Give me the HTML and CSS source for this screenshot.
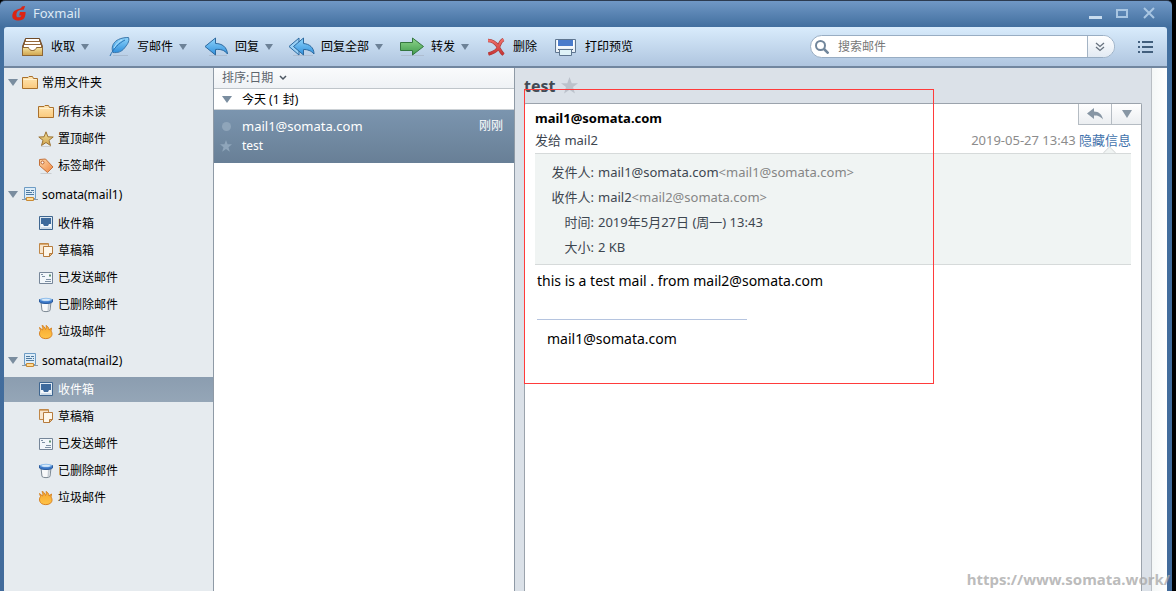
FILE: index.html
```html
<!DOCTYPE html>
<html lang="zh-CN">
<head>
<meta charset="utf-8">
<title>Foxmail</title>
<link rel="stylesheet" href="styles.css">
</head>
<body>
<svg class="defs" aria-hidden="true">
  <defs>
    <linearGradient id="gBlue" x1="0" y1="0" x2="0" y2="1"><stop offset="0" stop-color="#8fd4fb"/><stop offset="1" stop-color="#2f8fdc"/></linearGradient>
    <linearGradient id="gGreen" x1="0" y1="0" x2="0" y2="1"><stop offset="0" stop-color="#8fd68c"/><stop offset="1" stop-color="#3f9a4c"/></linearGradient>
    <linearGradient id="gGold" x1="0" y1="0" x2="0" y2="1"><stop offset="0" stop-color="#f4e3a0"/><stop offset="1" stop-color="#cfa24a"/></linearGradient>
    <linearGradient id="gFolder" x1="0" y1="0" x2="0" y2="1"><stop offset="0" stop-color="#ffe6b3"/><stop offset="1" stop-color="#fbc97c"/></linearGradient>
    <linearGradient id="gTag" x1="0" y1="0" x2="1" y2="1"><stop offset="0" stop-color="#ffd9a8"/><stop offset="1" stop-color="#ee8540"/></linearGradient>
    <linearGradient id="gFlame" x1="0" y1="0" x2="0" y2="1"><stop offset="0" stop-color="#f6a72e"/><stop offset="1" stop-color="#ffc347"/></linearGradient>
    <linearGradient id="gRed" x1="0" y1="0" x2="0" y2="1"><stop offset="0" stop-color="#f0706a"/><stop offset="1" stop-color="#c73333"/></linearGradient>
  </defs>
  <symbol id="folder" viewBox="0 0 16 16"><path d="M.5 13.500v-11h5.500l1-1h3.500l1 2h4v10z" fill="url(#gFolder)" stroke="#a9702c"/><path d="M1.500 4.500h13" stroke="#fff1d0"/></symbol>
  <symbol id="star" viewBox="0 0 16 16"><path d="M3 15.500h10" stroke="#c9cdd0"/><path d="M8 .8l1.900 5 5.300.2-4.200 3.300 1.500 5.200L8 11.500l-4.500 3 1.500-5.200L.8 6l5.300-.2z" fill="url(#gGold)" stroke="#9c7333" stroke-linejoin="round"/></symbol>
  <symbol id="tag" viewBox="0 0 16 16"><path d="M2.500 15.500h11" stroke="#c9cdd0"/><path d="M1.500 1.500l6-.5 7.500 8-5.500 5.500L1.500 7.500z" fill="url(#gTag)" stroke="#c4713a" stroke-linejoin="round"/><circle cx="4.500" cy="4.500" r="1.500" fill="#fff" stroke="#b55f2f"/></symbol>
  <symbol id="server" viewBox="0 0 16 16"><path d="M2.500 .5h11v11h-11z" fill="#dcecf8" stroke="#6e9cc4"/><path d="M4 3.500h4M9 3.500h3M4 5.500h6M11 5.500h1M4 7.500h8" stroke="#4f7aa0"/><path d="M0 12.500h16" stroke="#8b98a4"/><path d="M4.500 10.500h7v3h-7z" fill="#ffdc96" stroke="#c98a35"/></symbol>
  <symbol id="inbox" viewBox="0 0 16 16"><path d="M1.500 .5h13v13h-13z" fill="#dfe9f2" stroke="#3f6690"/><path d="M3 2h10v8H3z" fill="#3e6a9c"/><path d="M3 8h2l1 2h4l1-2h2v3.500H3z" fill="#f4f8fb"/><path d="M3 12h10" stroke="#b8cbdc"/></symbol>
  <symbol id="drafts" viewBox="0 0 16 16"><path d="M1.500 .5h9v10h-9z" fill="#f7e5cc" stroke="#c08747"/><path d="M2 1.500h8" stroke="#d9a96f"/><path d="M5.500 3.500h9v7l-3 3h-6z" fill="#fdf6e9" stroke="#b67b3c"/><path d="M14.500 10.500h-3v3z" fill="#e8bc84" stroke="#b67b3c"/></symbol>
  <symbol id="sent" viewBox="0 0 16 16"><path d="M1.500 2.500h13v11h-13z" fill="#f2f7fb" stroke="#768699"/><path d="M11 4.500h2v2h-2z" fill="#5f9172"/><path d="M3 4.500h2M4 6.500h3M8 9.500h5M7 11.500h6" stroke="#7e91a5"/></symbol>
  <symbol id="trash" viewBox="0 0 16 16"><path d="M3 5l1 8.500c1 1.500 7 1.500 8 0L13 5z" fill="#f8f9fa" stroke="#7c8893"/><path d="M10 6h2l-1 8H9.500z" fill="#c5ccd3"/><path d="M1.500 2.500h13v2.500c-2 2-11 2-13 0z" fill="#3c78c8" stroke="#2b5c9e"/><ellipse cx="8" cy="2.500" rx="6" ry="1.800" fill="#8fbdeb"/><ellipse cx="8" cy="2.800" rx="4" ry="1" fill="#d8eafa"/></symbol>
  <symbol id="flame" viewBox="0 0 16 16"><path d="M3.500 13.500C1 11.500 1 8.500 2.500 6.500l-1-3 3 2.500c1-1.500 0-3-.5-4.500 2 .5 3 2 3.500 4 1-1 1-2.500.5-4 2 1 3 2.500 3 4.500l2.500-2-.5 3c1.500 2 1.500 5-1 6.500-2 1.500-6.500 1.500-8.500 0z" fill="url(#gFlame)" stroke="#d78324"/></symbol>
  <symbol id="flatstar" viewBox="0 0 16 16"><path d="M8 0l2.100 5.800H16l-4.700 3.700 1.800 6L8 12l-5.100 3.500 1.800-6L0 5.800h5.900z" fill="currentColor"/></symbol>
</svg>

<div class="window">
  <header class="titlebar">
    <svg class="logo" viewBox="0 0 16 16"><path d="M14 0l-1.500 4C9 3.500 5.800 4.500 5 7.500c-.6 2.500-.5 4.300 1.500 4.500 1.800.2 3-.5 3.500-2H7.500L8.500 6.500h6c-.2 5-1 9-7.500 9C1.500 15.500-.5 13 .6 8.500 1.300 6 3 4.500 5.500 3.800 8 3 10 2.500 10.500.5z" fill="#dd2413"/></svg>
    <span class="app-name">Foxmail</span>
    <div class="window-controls">
      <button aria-label="最小化"><svg viewBox="0 0 14 14"><path d="M0 11.500h13" stroke="#c8dcef" stroke-width="3"/></svg></button>
      <button aria-label="最大化"><svg viewBox="0 0 14 14"><path d="M1 4h10v7H1z" fill="none" stroke="#a9c6e2" stroke-width="2"/></svg></button>
      <button aria-label="关闭"><svg viewBox="0 0 14 14"><path d="M1 2l10 10M11 2L1 12" stroke="#a9c6e2" stroke-width="2"/></svg></button>
    </div>
  </header>

  <div class="toolbar">
    <nav class="actions" aria-label="邮件操作">
      <button class="action"><svg class="tool-icon" viewBox="0 0 29 22"><path d="M9.500 2.500h14l3 8v9h-20v-9z" fill="#95693c" stroke="#6f4a27" stroke-linejoin="round"/><path d="M10 3h13v2H10zM9 6h15v2H9zM8 9h17v5H8z" fill="#fff"/><path d="M6.500 11.500h6c.5 2 2 3 4 3s3.500-1 4-3h6v8h-20z" fill="url(#gGold)" stroke="#8c6534" stroke-linejoin="round"/></svg><span>收取</span><i class="caret"></i></button>
      <button class="action"><svg class="tool-icon" viewBox="0 0 29 22"><path d="M11 19.500h15" stroke="#a8bacf"/><path d="M11 16.500C8 9 13.500 1.500 26.500 1.500c1.500 4-2 8-4 10.500-3 4-7 5-11.500 4.500z" fill="url(#gBlue)" stroke="#3976ab"/><path d="M8 20C11 13 17 7 23 4" fill="none" stroke="#2a73b3"/><path d="M12 12c2-4 5-7 8-8" fill="none" stroke="#b9e4fc"/></svg><span>写邮件</span><i class="caret"></i></button>
      <button class="action"><svg class="tool-icon" viewBox="0 0 29 22"><path d="M9 19.500h18" stroke="#aebdd0"/><path d="M5 10.500L15.500 2v5.500C22 7.500 27 11 27.500 18c-3-4-7-5-12-4.500V19z" fill="url(#gBlue)" stroke="#2c699f" stroke-linejoin="round"/></svg><span>回复</span><i class="caret"></i></button>
      <button class="action"><svg class="tool-icon" viewBox="0 0 29 22"><path d="M7 19.500h20" stroke="#aebdd0"/><path d="M3 10.500L13 2v17z" fill="#9bd1f5" stroke="#2c699f"/><path d="M7.500 10.500L17.500 2v5.500c6 .5 10.500 4 10.500 10.500-3-3.500-6.500-4.500-10.500-4.500V19z" fill="url(#gBlue)" stroke="#2c699f" stroke-linejoin="round"/></svg><span>回复全部</span><i class="caret"></i></button>
      <button class="action"><svg class="tool-icon" viewBox="0 0 29 22"><path d="M5 19.500h23" stroke="#aebdd0"/><path d="M4.500 6.500h12V2L27.500 10.500 16.500 19v-4.500h-12z" fill="url(#gGreen)" stroke="#34773f" stroke-linejoin="round"/></svg><span>转发</span><i class="caret"></i></button>
      <button class="action"><svg class="tool-icon narrow" viewBox="0 0 25 22"><path d="M6 4.500c5 0 8 3 10 6 2 4 3 6 5.500 8M21.500 3.500c-4 2-4 6-6 9.500-2 2.500-5 4-9 5" fill="none" stroke="#a33a3a" stroke-width="3.500"/><path d="M6 4.500c5 0 8 3 10 6 2 4 3 6 5.500 8M21.500 3.500c-4 2-4 6-6 9.500-2 2.500-5 4-9 5" fill="none" stroke="url(#gRed)" stroke-width="2.300"/></svg><span>删除</span></button>
      <button class="action"><svg class="tool-icon" viewBox="0 0 29 22"><path d="M5.500 3.500h20v13h-20z" fill="#e9f0f7" stroke="#5f7690"/><path d="M8 4h15v6H8z" fill="#4a7bcb"/><path d="M7.500 4v7h16V4" fill="none" stroke="#fff"/><path d="M8 13.500h15" stroke="#47617c"/><path d="M9.500 13.500h12v6h-12z" fill="#dff3f8" stroke="#5f7690"/></svg><span>打印预览</span></button>
    </nav>
    <div class="search">
      <label class="search-label" for="q" aria-label="搜索邮件"><svg viewBox="0 0 14 14"><circle cx="5.500" cy="5.500" r="4.500" fill="none" stroke="#71869b" stroke-width="2"/><path d="M9 9l4.500 4.500" stroke="#71869b" stroke-width="2.500"/></svg></label>
      <input id="q" type="text" placeholder="搜索邮件">
      <button class="search-more" aria-label="高级搜索"><svg viewBox="0 0 10 10"><path d="M1 1l4 3.500L9 1M1 5l4 3.500L9 5" fill="none" stroke="#66717d" stroke-width="1.300"/></svg></button>
    </div>
    <button class="menu" aria-label="菜单"><svg viewBox="0 0 16 14"><path d="M0 2h2M0 7h2M0 12h2M4 2h11M4 7h11M4 12h11" stroke="#425f7d" stroke-width="2"/></svg></button>
  </div>

  <main class="panes">
    <nav class="folders" aria-label="文件夹">
      <button class="group"><i class="caret"></i><svg><use href="#folder"/></svg>常用文件夹</button>
      <a class="folder" href="#"><svg><use href="#folder"/></svg>所有未读</a>
      <a class="folder" href="#"><svg><use href="#star"/></svg>置顶邮件</a>
      <a class="folder" href="#"><svg><use href="#tag"/></svg>标签邮件</a>
      <button class="group"><i class="caret"></i><svg><use href="#server"/></svg>somata(mail1)</button>
      <a class="folder" href="#"><svg><use href="#inbox"/></svg>收件箱</a>
      <a class="folder" href="#"><svg><use href="#drafts"/></svg>草稿箱</a>
      <a class="folder" href="#"><svg><use href="#sent"/></svg>已发送邮件</a>
      <a class="folder" href="#"><svg><use href="#trash"/></svg>已删除邮件</a>
      <a class="folder" href="#"><svg><use href="#flame"/></svg>垃圾邮件</a>
      <button class="group"><i class="caret"></i><svg><use href="#server"/></svg>somata(mail2)</button>
      <a class="folder selected" href="#"><svg><use href="#inbox"/></svg>收件箱</a>
      <a class="folder" href="#"><svg><use href="#drafts"/></svg>草稿箱</a>
      <a class="folder" href="#"><svg><use href="#sent"/></svg>已发送邮件</a>
      <a class="folder" href="#"><svg><use href="#trash"/></svg>已删除邮件</a>
      <a class="folder" href="#"><svg><use href="#flame"/></svg>垃圾邮件</a>
    </nav>

    <section class="messages" aria-label="邮件列表">
      <button class="sort">排序:日期<svg viewBox="0 0 8 6"><path d="M1 1l3 3 3-3" fill="none" stroke="#4c5661" stroke-width="1.500"/></svg></button>
      <button class="day"><i class="caret"></i>今天 (1 封)</button>
      <article class="message">
        <i class="dot"></i>
        <span class="from">mail1@somata.com</span>
        <time class="when">刚刚</time>
        <svg class="flag"><use href="#flatstar"/></svg>
        <span class="title">test</span>
      </article>
    </section>

    <section class="reader">
      <h1 class="subject">test<svg><use href="#flatstar"/></svg></h1>
      <article class="mail">
        <header class="mail-head">
          <div class="people">
            <strong>mail1@somata.com</strong>
            <span>发给 mail2</span>
          </div>
          <div class="head-side">
            <div class="mail-buttons">
              <button aria-label="回复"><svg viewBox="0 0 16 12"><path d="M0 5.500L7 0v3.500c5 0 8 3 9 8-3-3.500-5.500-4-9-4V11z" fill="#8796a4"/></svg></button>
              <button aria-label="更多"><i class="caret"></i></button>
            </div>
            <p class="sent-at"><time>2019-05-27 13:43</time> <a href="#">隐藏信息</a></p>
          </div>
        </header>
        <dl class="details">
          <dt>发件人:</dt><dd>mail1@somata.com<span>&lt;mail1@somata.com&gt;</span></dd>
          <dt>收件人:</dt><dd>mail2<span>&lt;mail2@somata.com&gt;</span></dd>
          <dt>时间:</dt><dd>2019年5月27日 (周一) 13:43</dd>
          <dt>大小:</dt><dd>2 KB</dd>
        </dl>
        <div class="mail-body">
          <p>this is a test mail . from mail2@somata.com</p>
          <hr>
          <p class="signature">mail1@somata.com</p>
        </div>
      </article>
      <div class="marker"></div>
    </section>
    <aside class="rail"></aside>
  </main>
  <div class="watermark">https://www.somata.work/</div>
</div>
</body>
</html>
```
FILE: styles.css
```css
* { box-sizing: border-box; }

body {
  margin: 0;
  background: #000;
  font: 12px/16px "Noto Sans", "Noto Sans CJK SC", sans-serif;
  color: #000;
}

button {
  margin: 0;
  padding: 0;
  border: 0;
  background: none;
  font: inherit;
  color: inherit;
  text-align: left;
}

a { color: inherit; text-decoration: none; }
p { margin: 0; }
.defs { position: absolute; width: 0; height: 0; }

.caret {
  flex: none;
  width: 0;
  height: 0;
  border: 4px solid transparent;
  border-top: 6px solid #6d8297;
  border-bottom: 0;
}

.window {
  position: relative;
  display: flex;
  flex-direction: column;
  min-height: 100vh;
  margin-right: 4px;
  padding: 0 5px 0 4px;
  border-top: 1px solid #2c3b50;
  border-radius: 5px 5px 0 0;
  background: linear-gradient(#7098c6, #426f9f 26px, #426b9b);
}

.titlebar {
  display: flex;
  align-items: center;
  height: 26px;
  padding: 0 10px 2px 8px;
}
.logo { width: 15px; height: 15px; }
.app-name { margin-left: 6px; color: #dde9f5; font-size: 13px; }
.window-controls { display: flex; gap: 13px; margin-left: auto; }
.window-controls svg { display: block; width: 14px; height: 14px; }

.toolbar {
  display: flex;
  align-items: center;
  height: 41px;
  padding: 0 13px 0 12px;
  border-bottom: 2px solid #71869f;
  border-radius: 3px 3px 0 0;
  background: linear-gradient(#d9ecfc, #afc5df);
}
.actions { display: flex; gap: 13px; }
.action { display: flex; align-items: center; gap: 6px; white-space: nowrap; }
.tool-icon { width: 29px; height: 22px; }
.tool-icon.narrow { width: 25px; }

.search {
  display: flex;
  width: 305px;
  height: 23px;
  margin-left: auto;
  border: 1px solid #98adc3;
  border-radius: 12px;
  background: #fff;
  overflow: hidden;
}
.search-label { display: flex; align-items: center; padding: 0 9px 0 4px; }
.search-label svg { width: 14px; height: 14px; }
.search input {
  flex: 1;
  min-width: 0;
  padding: 0;
  border: 0;
  outline: 0;
  background: none;
  font: inherit;
}
.search input::placeholder { color: #777; opacity: 1; }
.search-more {
  display: flex;
  align-items: center;
  justify-content: center;
  width: 27px;
  padding-right: 3px;
  border-left: 1px solid #a4b4c5;
  background: linear-gradient(#fff, #e2eaf3);
}
.search-more svg { width: 10px; height: 10px; }
.menu { margin-left: 23px; }
.menu svg { display: block; width: 16px; height: 14px; }

.panes {
  display: grid;
  grid-template-columns: 210px 301px 1fr 15px;
  flex: 1;
}

.folders {
  display: flex;
  flex-direction: column;
  gap: 2px;
  border-right: 1px solid #8f9aa6;
  background: #e6ebef;
}
.folders svg { flex: none; width: 16px; height: 16px; }
.group {
  display: flex;
  align-items: center;
  gap: 4px;
  height: 29px;
  padding-left: 4px;
}
.folders .caret, .day .caret {
  border-width: 7px 5px 0;
  border-top-color: #7a8d9f;
}
.folder {
  display: flex;
  align-items: center;
  gap: 4px;
  height: 25px;
  padding-left: 34px;
}
.folder.selected { background: linear-gradient(#8b9db0, #95a6b7); color: #fff; }

.messages { border-right: 1px solid #8f9aa6; background: #fff; }
.sort {
  display: flex;
  align-items: center;
  gap: 6px;
  width: 100%;
  height: 21px;
  padding-left: 8px;
  border-bottom: 1px solid #bfc5ca;
  background: linear-gradient(#fafbfc, #eff2f5);
  color: #5d656d;
}
.sort svg { width: 8px; height: 6px; }
.day {
  display: flex;
  align-items: center;
  gap: 10px;
  width: 100%;
  height: 21px;
  padding: 1px 0 0 8px;
  border-bottom: 1px solid #ccd1d5;
}
.message {
  display: grid;
  grid-template-columns: 12px 1fr auto;
  grid-template-rows: 20px 20px;
  align-items: center;
  column-gap: 10px;
  height: 53px;
  padding: 6px 11px 7px 6px;
  background: linear-gradient(#7b95af, #687f96);
  color: #fff;
}
.dot { justify-self: center; width: 9px; height: 9px; border-radius: 50%; background: #8fa5ba; }
.from { font-size: 13px; }
.flag { width: 12px; height: 12px; color: #8fa5ba; }

.reader {
  position: relative;
  display: flex;
  flex-direction: column;
  min-width: 0;
  padding: 0 9px;
  border-right: 1px solid #b9bec4;
  background: #dbe1e8;
}
.subject {
  display: flex;
  align-items: center;
  gap: 6px;
  height: 35px;
  margin: 0;
  font-size: 16px;
  color: #414a54;
}
.subject svg { width: 17px; height: 17px; color: #bcc2cb; }
.mail {
  flex: 1;
  border: 1px solid #9ba3ac;
  border-bottom: 0;
  border-radius: 2px 2px 0 0;
  background: #fff;
  color: #3d4650;
  font-size: 13px;
}
.mail-head { display: flex; justify-content: space-between; height: 49px; padding-left: 10px; }
.people { display: flex; flex-direction: column; padding-top: 3px; line-height: 22px; }
.people strong { color: #000; }
.head-side { display: flex; flex-direction: column; align-items: flex-end; }
.mail-buttons { display: flex; border: solid #b5bcc3; border-width: 0 0 1px 1px; background: linear-gradient(#fff, #ebeef1); }
.mail-buttons button { display: flex; align-items: center; justify-content: center; width: 29px; height: 20px; }
.mail-buttons button:first-child { width: 33px; border-right: 1px solid #b5bcc3; }
.mail-buttons svg { width: 16px; height: 12px; }
.mail-buttons .caret { border-width: 8px 5px 0; border-top-color: #8796a4; }
.sent-at { padding: 4px 10px 0 0; line-height: 22px; color: #8c8c8c; white-space: nowrap; }
.sent-at a { position: relative; color: #3f72ac; }
.sent-at a::after {
  content: "";
  position: absolute;
  left: 50%;
  top: 17px;
  width: 8px;
  height: 8px;
  border: solid #d6dada;
  border-width: 1px 0 0 1px;
  background: linear-gradient(135deg, #f0f4f3 50%, transparent 50%);
  transform: rotate(45deg);
}
.details {
  display: grid;
  grid-template-columns: 59px 1fr;
  column-gap: 4px;
  margin: 0 10px;
  padding: 6px 0 4px;
  border: solid #d6dada;
  border-width: 1px 0;
  background: #f0f4f3;
  line-height: 25px;
}
.details dt { text-align: right; }
.details dd { margin: 0; }
.details span { color: #858585; }
.mail-body { padding: 5px 12px; color: #000; font-size: 14px; line-height: 22px; }
.mail-body hr { width: 210px; margin: 27px 0 8px; border: 0; border-top: 1px solid #b5c4df; }
.signature { padding-left: 10px; }
.marker {
  position: absolute;
  left: 9px;
  top: 21px;
  width: 410px;
  height: 295px;
  border: 1px solid #ff3b3b;
  pointer-events: none;
}
.rail { background: linear-gradient(90deg, #f4f7f7, #fff); }

.watermark {
  position: absolute;
  right: 2px;
  bottom: 2px;
  color: rgba(170, 170, 170, .8);
  font-size: 15px;
  font-weight: 700;
  line-height: 20px;
}
```
